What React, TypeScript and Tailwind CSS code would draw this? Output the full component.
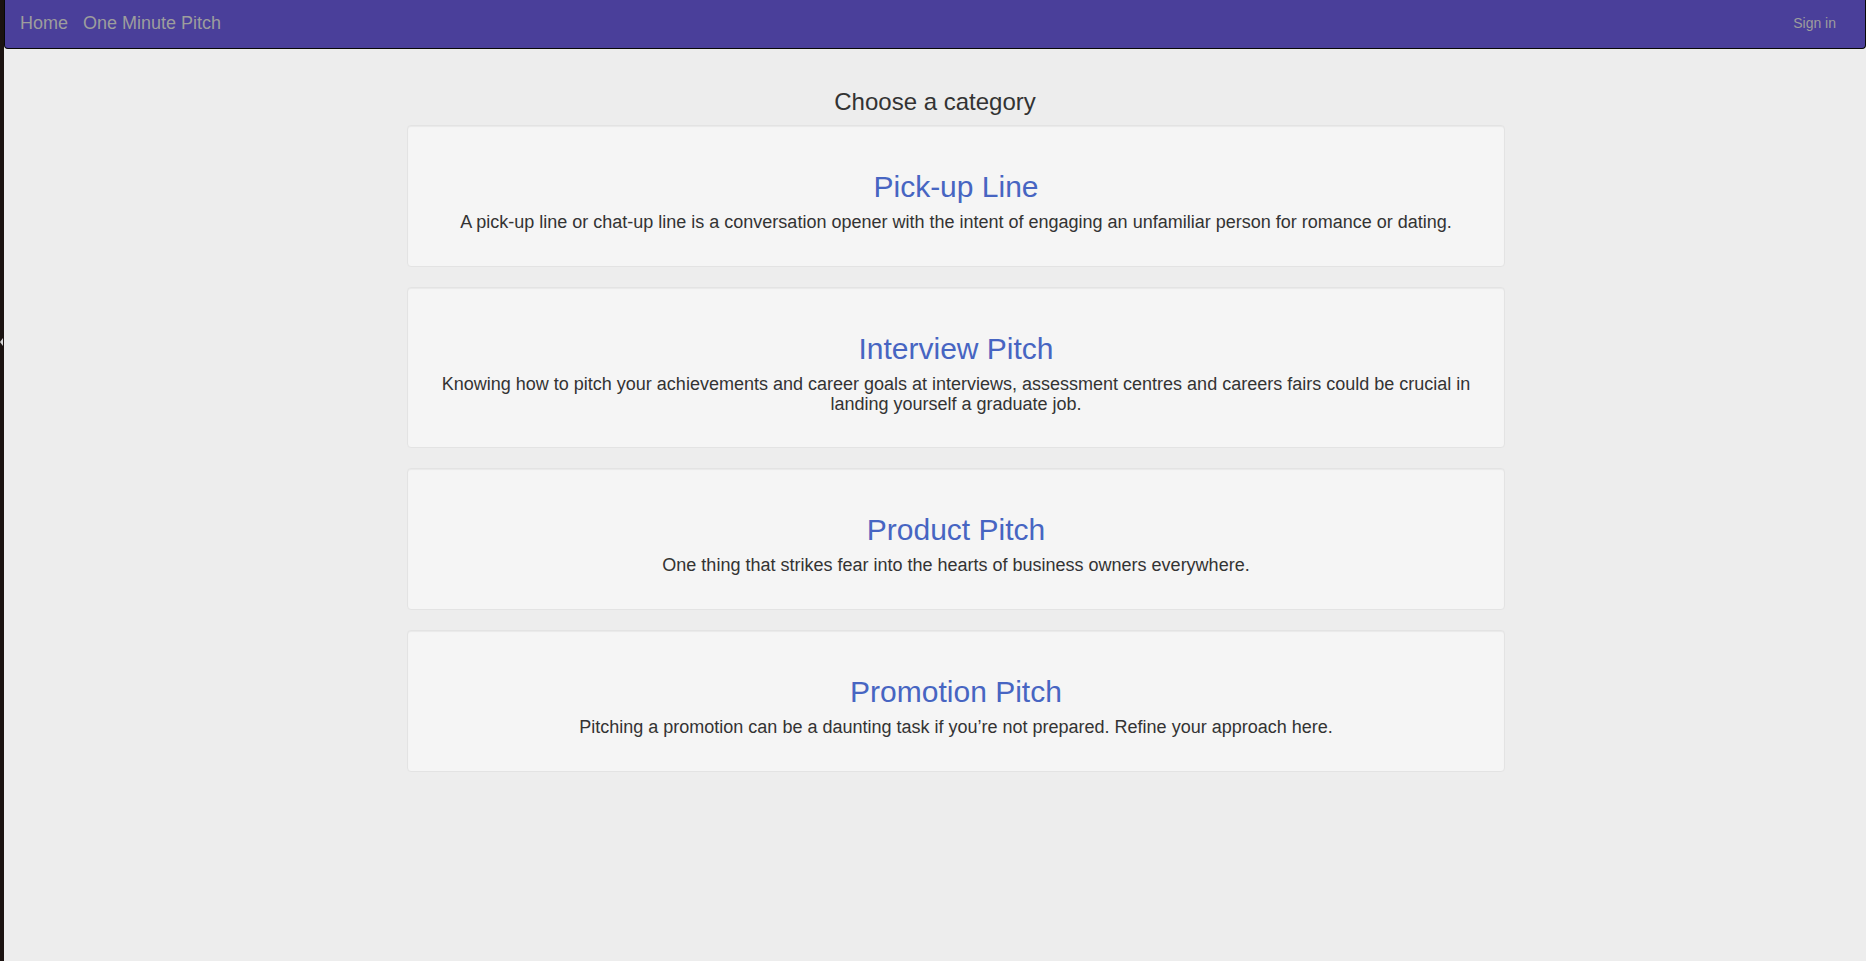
const CATEGORIES = [
  {
    title: 'Pick-up Line',
    desc: 'A pick-up line or chat-up line is a conversation opener with the intent of engaging an unfamiliar person for romance or dating.',
  },
  {
    title: 'Interview Pitch',
    desc: 'Knowing how to pitch your achievements and career goals at interviews, assessment centres and careers fairs could be crucial in landing yourself a graduate job.',
  },
  {
    title: 'Product Pitch',
    desc: 'One thing that strikes fear into the hearts of business owners everywhere.',
  },
  {
    title: 'Promotion Pitch',
    desc: 'Pitching a promotion can be a daunting task if you\u2019re not prepared. Refine your approach here.',
  },
];

export default function App() {
  return (
    <div
      className="flex min-h-screen w-full bg-[#ededed] text-[#333333]"
      style={{ fontFamily: '"Liberation Sans", Arial, sans-serif' }}
    >
      {/* window edge */}
      <div className="w-[4px] shrink-0 bg-[#1b1311] flex flex-col">
        <svg className="mt-[338px] w-[3px] h-[8px]" viewBox="0 0 3 8">
          <path d="M3 0 L0 4 L3 8 Z" fill="#d8d8d8" />
        </svg>
      </div>

      <div className="flex-1 flex flex-col">
        {/* Navbar */}
        <nav className="h-[49px] flex items-center bg-[#4a3f9a] border-b border-x border-[#080808] rounded-b-[4px] pl-[15px] pr-[29px] pb-[2px]">
          <a className="text-[18px] leading-[20px] text-[#9d9d9d]">Home</a>
          <a className="ml-[15px] text-[18px] leading-[20px] text-[#9d9d9d]">One Minute Pitch</a>
          <a className="ml-auto text-[14px] leading-[20px] text-[#9d9d9d]">Sign in</a>
        </nav>

        {/* Content */}
        <main className="flex flex-col items-center pt-[40px]">
          <h3 className="text-[24px] leading-[26px] text-[#333333]">Choose a category</h3>
          <div className="mt-[10px] ml-[42px] w-[1098px] flex flex-col gap-[20px]">
            {CATEGORIES.map(c => (
              <div
                key={c.title}
                className="bg-[#f5f5f5] border border-[#e3e3e3] rounded-[4px] px-[19px] pt-[44px] pb-[33px] text-center shadow-[inset_0_1px_1px_rgba(0,0,0,0.05)]"
              >
                <h2 className="text-[30px] leading-[33px] text-[#4765c2]">{c.title}</h2>
                <p className="mt-[10px] text-[18px] leading-[19.8px] text-[#333333]">{c.desc}</p>
              </div>
            ))}
          </div>
        </main>
      </div>
    </div>
  );
}
